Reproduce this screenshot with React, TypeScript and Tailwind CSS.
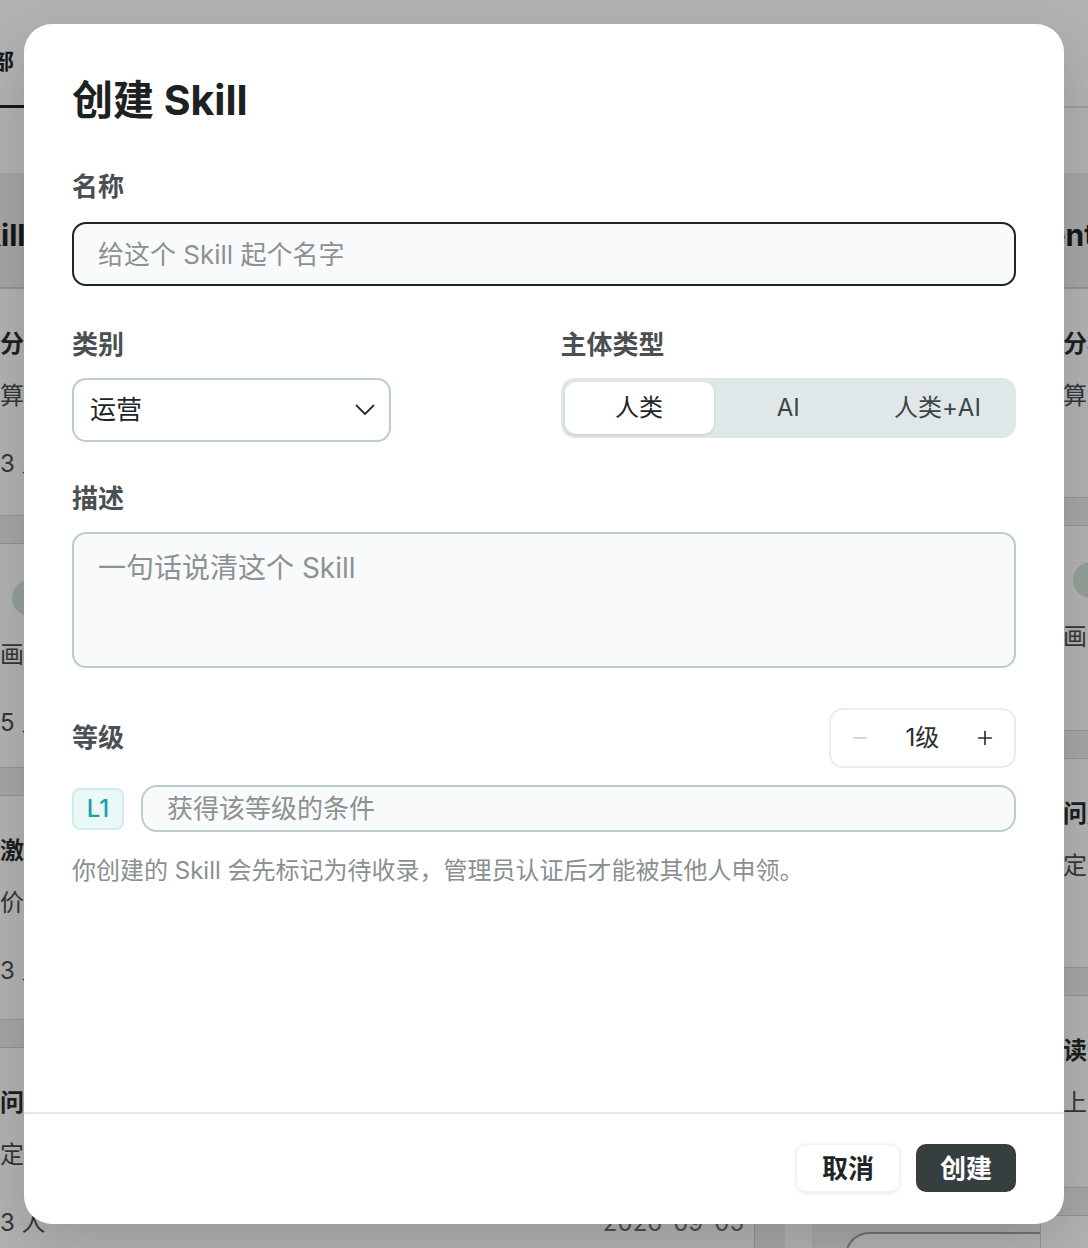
import { Minus, Plus } from "lucide-react";

type BgCard = {
  h: number;
  title?: string;
  sub: string;
  foot?: string;
  date?: string;
  pill?: boolean;
};

const leftCards: BgCard[] = [
  { h: 228, title: "分析用户增长数据", sub: "算法模型与指标拆解", foot: "3 人", date: "2026-08-12" },
  { h: 225, pill: true, sub: "画像构建与分层运营", foot: "5 人", date: "2026-08-20" },
  { h: 225, title: "激励体系设计", sub: "价值评估与反馈", foot: "3 人", date: "2026-08-28" },
  { h: 230, title: "问题拆解与复盘", sub: "定位根因与改进", foot: "3 人", date: "2026-09-05" },
];

const rightCards: BgCard[] = [
  { h: 210, title: "分析", sub: "算法" },
  { h: 206, pill: true, sub: "画像" },
  { h: 210, title: "问题", sub: "定位" },
  { h: 193, title: "读数", sub: "上线" },
  { h: 200, title: "复盘", sub: "总结" },
];

function CardView({ c, left }: { c: BgCard; left: boolean }) {
  return (
    <div
      className={
        left
          ? "flex flex-col border-y border-r border-[#cfd6d6] bg-white pl-[40px] pr-[10px] pt-[39px]"
          : "flex flex-col border-y border-l border-[#cfd6d6] bg-white pl-[22px] pt-[39px]"
      }
      style={{ height: c.h }}
    >
      {c.pill ? (
        <div
          className={
            left
              ? "-mt-[3px] mb-[3px] ml-[12px] h-[36px] w-[90px] rounded-full bg-[#d3e6da]"
              : "-mt-[3px] mb-[3px] ml-[10px] h-[36px] w-[90px] rounded-full bg-[#d3e6da]"
          }
        />
      ) : (
        <div className="whitespace-nowrap text-[24px] font-bold leading-[32px] text-[#2a2f30]">{c.title}</div>
      )}
      <div className="mt-[20px] whitespace-nowrap text-[24px] leading-[32px] text-[#4a5051]">{c.sub}</div>
      {c.foot && (
        <div className="mt-[36px] flex items-center justify-between text-[24px] leading-[32px] text-[#4a5051]">
          <span>{c.foot}</span>
          <span className="text-[#6b7172]">{c.date}</span>
        </div>
      )}
    </div>
  );
}

function Background() {
  return (
    <div className="h-[1248px] w-[1088px] overflow-hidden bg-white">
      <div className="flex h-[108px] items-end border-b-2 border-[#dde2e2]">
        <div className="-mb-[2px] -ml-[30px] border-b-[3px] border-[#1f2526] pb-[28px] pr-[20px] text-[22px] font-semibold leading-[32px] text-[#1f2526]">
          全部
        </div>
        <div className="ml-[40px] pb-[28px] text-[22px] leading-[32px] text-[#555]">我的</div>
      </div>
      <div className="mt-[65px] flex">
        <div className="-ml-[40px] flex w-[825px] shrink-0 flex-col bg-[#eceef1] pr-[30px]">
          <div className="flex h-[115px] items-center border-b border-[#cfd6d6] pl-[4px] pt-[10px] text-[30px] font-bold text-[#1f2526]">
            Skill 列表
          </div>
          <div className="flex flex-col gap-[27px]">
            {leftCards.map((c, i) => (
              <CardView key={i} c={c} left />
            ))}
          </div>
        </div>
        <div className="ml-[27px] flex w-[228px] shrink-0 flex-col bg-[#f1f1f4]">
          <div className="h-[115px] border-b border-[#cfd6d6]" />
          <div className="mt-[944px] ml-[33px] h-[200px] rounded-tl-[24px] border-l-2 border-t-2 border-[#9aa5a5] bg-white" />
        </div>
        <div className="flex w-[400px] shrink-0 flex-col bg-[#eceef1]">
          <div className="flex h-[115px] items-center border-b border-[#cfd6d6] pt-[10px] text-[30px] font-bold text-[#1f2526]">
            <span className="-ml-[33px]">Agent</span>
          </div>
          <div className="flex flex-col gap-[27px]">
            {rightCards.map((c, i) => (
              <CardView key={i} c={c} left={false} />
            ))}
          </div>
        </div>
      </div>
    </div>
  );
}

function Label({ children }: { children: React.ReactNode }) {
  return <div className="text-[26px] font-semibold leading-[32px] text-[#4a5051]">{children}</div>;
}

export default function App() {
  return (
    <div className="relative h-[1248px] w-[1088px] overflow-hidden font-['Inter','Noto_Sans_CJK_SC',sans-serif]">
      <Background />
      <div className="absolute inset-0 flex items-center justify-center bg-black/30">
        <div className="flex h-[1200px] w-[1040px] flex-col rounded-[28px] bg-white shadow-[0_20px_60px_rgba(0,0,0,0.15)]">
          <div className="flex-1 px-[48px] pt-[52px]">
            <h1 className="text-[41px] font-bold leading-[48px] text-[#1c2122]">创建 Skill</h1>

            <div className="mt-[47px]">
              <Label>名称</Label>
              <input
                className="mt-[19px] h-[64px] w-full rounded-[14px] border-2 border-[#1f2526] bg-[#f8fafb] pl-[24px] text-[26px] text-[#1f2526] outline-none placeholder:text-[#8c9192]"
                placeholder="给这个 Skill 起个名字"
              />
            </div>

            <div className="mt-[43px] grid grid-cols-2 gap-x-[33px]">
              <div>
                <Label>类别</Label>
                <div className="mt-[17px] flex h-[64px] w-[319px] items-center justify-between rounded-[14px] border-2 border-[#bccdcd] bg-white pl-[16px] pr-[14px]">
                  <span className="text-[26px] leading-[32px] text-[#1f2526]">运营</span>
                  <svg width="20" height="12" viewBox="0 0 20 12" fill="none" className="text-[#2a2f30]">
                    <polyline points="1.5,1.5 10,10 18.5,1.5" stroke="currentColor" strokeWidth="1.8" strokeLinecap="round" strokeLinejoin="round" />
                  </svg>
                </div>
              </div>
              <div>
                <Label>主体类型</Label>
                <div className="mt-[17px] flex h-[60px] w-full rounded-[14px] bg-[#dfe7e8] p-[4px]">
                  <div className="flex flex-1 items-center justify-center rounded-[11px] bg-white text-[24px] text-[#1f2526] shadow-[0_1px_3px_rgba(0,0,0,0.14)]">
                    人类
                  </div>
                  <div className="flex flex-1 items-center justify-center text-[24px] text-[#3e4445]">AI</div>
                  <div className="flex flex-1 items-center justify-center text-[24px] text-[#3e4445]">人类+AI</div>
                </div>
              </div>
            </div>

            <div className="mt-[41px]">
              <Label>描述</Label>
              <textarea
                className="mt-[17px] block h-[136px] w-full resize-none rounded-[14px] border-2 border-[#bccdcd] bg-[#f8fafb] px-[24px] pt-[14px] text-[28px] leading-[40px] text-[#1f2526] outline-none placeholder:text-[#8c9192]"
                placeholder="一句话说清这个 Skill"
              />
            </div>

            <div className="mt-[40px] flex items-center justify-between">
              <Label>等级</Label>
              <div className="flex h-[60px] w-[187px] items-center justify-between rounded-[14px] border-2 border-[#ececec] bg-white px-[18px]">
                <Minus size={22} strokeWidth={1.6} className="text-[#c6c8c8]" />
                <span className="text-[24px] leading-[32px] text-[#2a2f30]">1级</span>
                <Plus size={22} strokeWidth={1.8} className="text-[#2a2f30]" />
              </div>
            </div>

            <div className="mt-[17px] flex items-center gap-[17px]">
              <div className="flex h-[42px] w-[52px] items-center justify-center rounded-[8px] border-2 border-[#cdeeee] bg-[#eaf8f8] text-[24px] font-medium text-[#17a3a5]">
                L1
              </div>
              <input
                className="h-[47px] flex-1 rounded-[16px] border-2 border-[#bccdcd] bg-[#f8fafb] pl-[24px] text-[26px] text-[#1f2526] outline-none placeholder:text-[#8c9192]"
                placeholder="获得该等级的条件"
              />
            </div>

            <p className="mt-[23px] text-[24px] leading-[32px] text-[#8a8f90]">
              你创建的 Skill 会先标记为待收录，管理员认证后才能被其他人申领。
            </p>
          </div>

          <div className="flex justify-end gap-[16px] border-t-2 border-[#e6e6e6] px-[48px] pb-[32px] pt-[30px]">
            <button className="flex h-[48px] w-[104px] items-center justify-center rounded-[10px] border border-[#f0f0f0] bg-white text-[26px] font-bold text-[#1f2526] shadow-[0_1px_4px_rgba(0,0,0,0.1)]">
              取消
            </button>
            <button className="flex h-[48px] w-[100px] items-center justify-center rounded-[10px] bg-[#363e3f] text-[26px] font-bold text-white">
              创建
            </button>
          </div>
        </div>
      </div>
    </div>
  );
}
